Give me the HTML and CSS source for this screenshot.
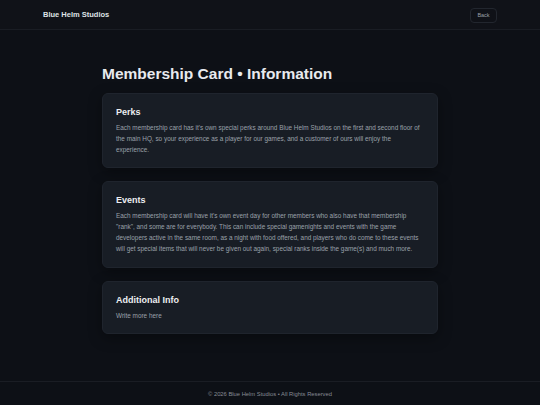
FILE: index.html
```html
<!DOCTYPE html>
<html lang="en">
<head>
<meta charset="utf-8">
<title>Membership Card • Information</title>
<link rel="stylesheet" href="styles.css">
</head>
<body>
<header class="topbar">
  <div class="brand">Blue Helm Studios</div>
  <a class="back-btn" href="#">Back</a>
</header>
<main class="content">
  <h1 class="page-title">Membership Card • Information</h1>
  <section class="card">
    <h2 class="card-title">Perks</h2>
    <p class="card-text">Each membership card has it's own special perks around Blue Helm Studios on the first and second floor of the main HQ, so your experience as a player for our games, and a customer of ours will enjoy the experience.</p>
  </section>
  <section class="card">
    <h2 class="card-title">Events</h2>
    <p class="card-text">Each membership card will have it's own event day for other members who also have that membership "rank", and some are for everybody. This can include special gamenights and events with the game developers active in the same room, as a night with food offered, and players who do come to these events will get special items that will never be given out again, special ranks inside the game(s) and much more.</p>
  </section>
  <section class="card">
    <h2 class="card-title">Additional Info</h2>
    <p class="card-text">Write more here</p>
  </section>
</main>
<footer class="footer">© 2026 Blue Helm Studios • All Rights Reserved</footer>
</body>
</html>
```
FILE: styles.css
```css
* { box-sizing: border-box; }
html, body { margin: 0; padding: 0; }
body {
  min-height: 100vh;
  display: flex;
  flex-direction: column;
  background: #0d1016;
  color: #e6e8eb;
  font-family: "Liberation Sans", Arial, sans-serif;
}
.topbar {
  height: 30px;
  display: flex;
  align-items: center;
  justify-content: space-between;
  padding: 0 43px;
  background: #101218;
  border-bottom: 1px solid #1a1d24;
}
.brand {
  font-size: 7.5px;
  font-weight: bold;
  color: #dfe2e6;
}
.back-btn {
  display: inline-flex;
  align-items: center;
  justify-content: center;
  width: 27px;
  height: 15px;
  font-size: 5.5px;
  color: #9aa0a9;
  text-decoration: none;
  border: 1px solid #22262e;
  border-radius: 4px;
  background: #0f1117;
  margin-top: 1px;
}
.content {
  flex: 1;
  width: 336px;
  margin: 0 auto;
  padding-top: 34px;
  padding-bottom: 20px;
  display: flex;
  flex-direction: column;
  gap: 13px;
}
.page-title {
  margin: 0 0 -3px;
  font-size: 15.5px;
  line-height: 19px;
  font-weight: bold;
  color: #e8eaee;
}
.card {
  background: #181d25;
  border: 1px solid #1f242d;
  border-radius: 6px;
  padding: 12px 13px;
  box-shadow: 0 4px 14px rgba(0, 0, 0, 0.35);
}
.card-title {
  margin: 0 0 5px;
  font-size: 9px;
  line-height: 12px;
  font-weight: bold;
  color: #eceef1;
}
.card-text {
  margin: 0;
  font-size: 6.4px;
  line-height: 10.8px;
  color: #9ba1aa;
}
.footer {
  height: 24px;
  flex-shrink: 0;
  display: flex;
  align-items: center;
  justify-content: center;
  border-top: 1px solid #1a1d24;
  background: #0d1016;
  font-size: 5.8px;
  color: #878c95;
}
```
